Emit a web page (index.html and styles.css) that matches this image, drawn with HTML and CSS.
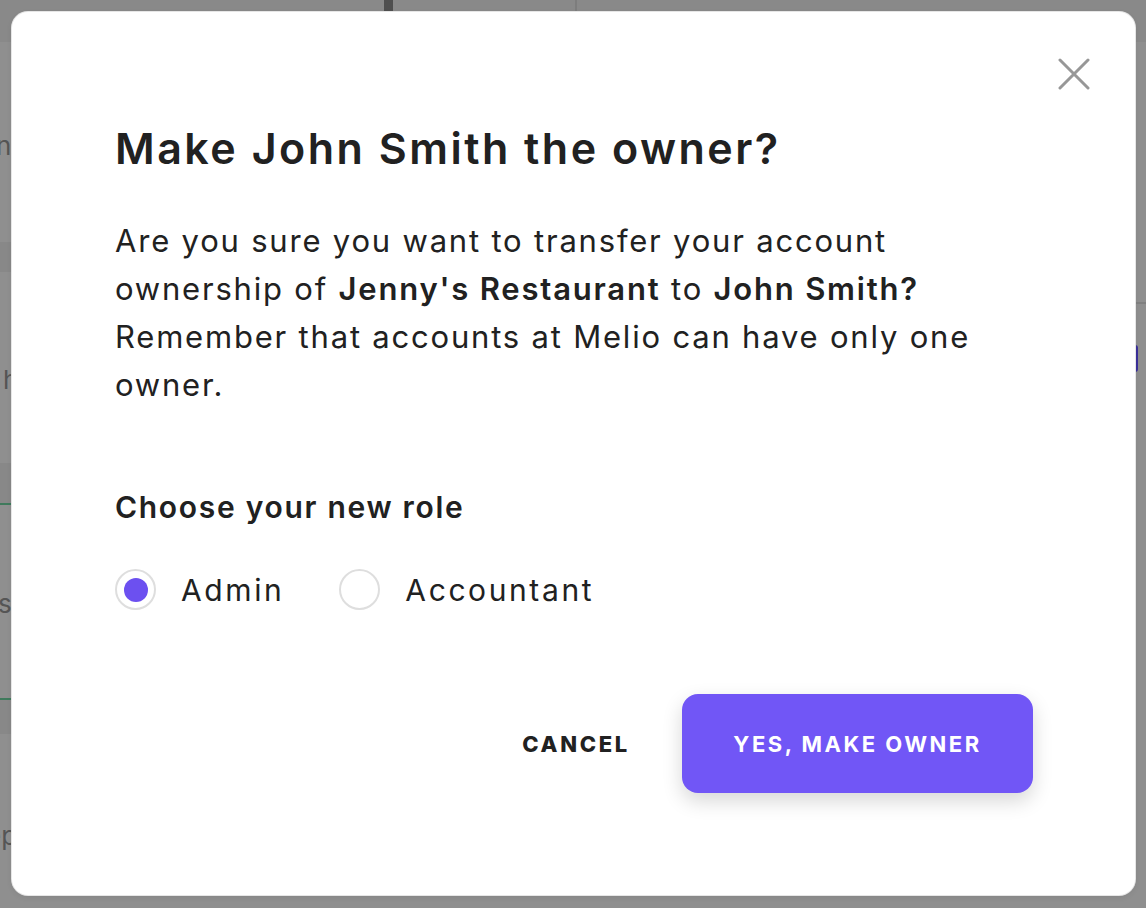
FILE: index.html
```html
<!DOCTYPE html>
<html lang="en">
<head>
  <meta charset="UTF-8">
  <title>Make owner</title>
  <meta name="viewport" content="width=device-width, initial-scale=1.0">
  <link rel="stylesheet" href="styles.css">
</head>
<body>

  <div class="page">
    <div class="topbar">
      <span class="divider dark"></span>
      <span class="divider"></span>
    </div>
    <div class="side">
      <p class="frag frag-n">n</p>
      <div class="band band-1"></div>
      <p class="frag frag-fa">f h<br>a</p>
      <div class="band band-2"></div>
      <p class="frag frag-s">s</p>
      <div class="band band-3"></div>
      <p class="frag frag-ep">ep</p>
    </div>
    <div class="right-line"></div>
    <div class="right-pill"></div>
  </div>

  <div class="modal">
    <button class="close" aria-label="Close">
      <svg width="32" height="32" viewBox="0 0 32 32">
        <path d="M2 2 L30 30 M30 2 L2 30" stroke="#979797" stroke-width="3" stroke-linecap="round" fill="none"/>
      </svg>
    </button>

    <h1 class="title">Make John Smith the owner?</h1>

    <p class="text">
      Are you sure you want to transfer your account ownership of
      <b>Jenny's Restaurant</b> to <b>John Smith?</b>
      Remember that accounts at Melio can have only one owner.
    </p>

    <h2 class="subtitle">Choose your new role</h2>

    <div class="roles">
      <label class="role">
        <span class="radio checked"></span>
        Admin
      </label>
      <label class="role">
        <span class="radio"></span>
        Accountant
      </label>
    </div>

    <div class="actions">
      <button class="btn-cancel">CANCEL</button>
      <button class="btn-primary">YES, MAKE OWNER</button>
    </div>
  </div>

</body>
</html>
```

FILE: styles.css
```css
body {
  margin: 0;
  padding: 0;
  font-family: 'Inter', 'Noto Sans', sans-serif;
  background: #8f8f8f;
  width: 1146px;
  height: 908px;
  overflow: hidden;
  position: relative;
}

/* faded app behind the modal */
.page {
  position: absolute;
  inset: 0;
}

.topbar {
  height: 42px;
  background: #898989;
  position: relative;
}

.divider {
  position: absolute;
  top: 0;
  left: 575px;
  width: 2px;
  height: 42px;
  background: #7d7d7d;
}

.divider.dark {
  left: 384px;
  width: 9px;
  background: #4f4f4f;
}

.side {
  position: absolute;
  left: 0;
  top: 42px;
  width: 14px;
  height: 866px;
  overflow: hidden;
}

.frag {
  position: absolute;
  margin: 0;
  font-size: 26px;
  line-height: 28px;
  color: #555;
  white-space: nowrap;
}

.frag-n { top: 90px; left: -4px; }
.frag-fa { top: 324px; left: -14px; }
.frag-s { top: 548px; left: -2px; }
.frag-ep { top: 780px; left: -14px; }

.band {
  position: absolute;
  left: 0;
  width: 14px;
  background: #888;
}

.band-1 { top: 200px; height: 30px; }
.band-2 { top: 421px; height: 40px; border-bottom: 2px solid #3f7a5c; }
.band-3 { top: 656px; height: 34px; border-top: 2px solid #3f7a5c; }

.right-line {
  position: absolute;
  right: 0;
  top: 302px;
  width: 12px;
  height: 2px;
  background: #808080;
}

.right-pill {
  position: absolute;
  left: 1135px;
  top: 345px;
  width: 3px;
  height: 27px;
  border-radius: 0 3px 3px 0;
  background: #3a2f9a;
}

/* modal */
.modal {
  position: absolute;
  left: 12px;
  top: 12px;
  width: 1123px;
  height: 883px;
  box-sizing: border-box;
  background: #fff;
  border-radius: 16px;
  box-shadow: 0 0 0 1px #e6e6e6, 0 2px 6px rgba(0, 0, 0, 0.08);
  padding: 108px 102px 0 103px;
  color: #212121;
}

.close {
  position: absolute;
  top: 46px;
  right: 45px;
  width: 32px;
  height: 32px;
  padding: 0;
  border: none;
  background: none;
  cursor: pointer;
}

.title {
  margin: 0;
  font-size: 43px;
  line-height: 56px;
  font-weight: 600;
  letter-spacing: 2.5px;
}

.text {
  margin: 41px 0 0;
  width: 880px;
  font-size: 31px;
  line-height: 48px;
  font-weight: 400;
  letter-spacing: 1.8px;
}

.text b {
  font-weight: 600;
}

.subtitle {
  margin: 78px 0 0;
  font-size: 30px;
  line-height: 40px;
  font-weight: 600;
  letter-spacing: 1.7px;
}

.roles {
  display: flex;
  gap: 55px;
  margin-top: 42px;
}

.role {
  display: flex;
  align-items: center;
  gap: 25px;
  font-size: 30px;
  line-height: 40px;
  letter-spacing: 2.6px;
}

.radio {
  width: 41px;
  height: 41px;
  box-sizing: border-box;
  border: 2px solid #dedede;
  border-radius: 50%;
  display: flex;
  align-items: center;
  justify-content: center;
}

.radio.checked::after {
  content: "";
  width: 24px;
  height: 24px;
  border-radius: 50%;
  background: #6c50f0;
}

.actions {
  display: flex;
  justify-content: flex-end;
  align-items: center;
  gap: 52px;
  margin-top: 84px;
}

button {
  font-family: inherit;
}

.btn-cancel {
  border: none;
  background: none;
  padding: 0;
  font-size: 22px;
  font-weight: 800;
  letter-spacing: 2.7px;
  color: #212121;
  cursor: pointer;
}

.btn-primary {
  width: 351px;
  height: 99px;
  border: none;
  border-radius: 16px;
  background: #7156f6;
  color: #fff;
  font-size: 22px;
  font-weight: 700;
  letter-spacing: 2.5px;
  box-shadow: 0 8px 20px rgba(0, 0, 0, 0.16);
  cursor: pointer;
}
```
